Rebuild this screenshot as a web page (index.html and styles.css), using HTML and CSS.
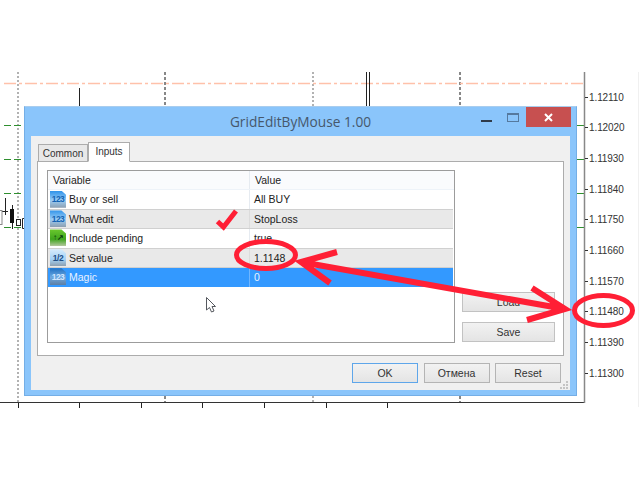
FILE: index.html
```html
<!DOCTYPE html>
<html lang="en">
<head>
<meta charset="utf-8">
<title>GridEditByMouse 1.00</title>
<link rel="stylesheet" href="styles.css">
</head>
<body>
<div class="stage">
  <svg class="chart" width="640" height="480" viewBox="0 0 640 480">
    <g class="grid-grey"><path d="M18 72V403M313 72V106M313 396V403"/></g>
    <g class="grid-black"><path d="M165 72V106M460 72V106M165 396V402M460 396V402"/></g>
    <path class="level" d="M4 83.500H585"/>
    <path class="green" d="M4 125.500H24M4 159.500H24M4 193.500H24M4 227.500H24M577 125.500H585M577 159.500H585M577 193.500H585M577 227.500H585"/>
    <path class="wick" d="M79.500 88V106M366.500 72V106M369.500 72V106M5.500 198V215M2 211.500H8M12.500 205V229"/>
    <rect class="body-black" x="10" y="209" width="4" height="14"/>
    <rect class="body-hollow" x="16.500" y="219.500" width="4" height="6"/>
    <rect class="body-grey" x="-2" y="210.500" width="4" height="14"/>
    <path class="wick" d="M24.500 218.500H22.500V228.500H24.500"/>
    <path class="axis-x" d="M0 402.500H585"/>
    <path class="axis-y" d="M584.500 72V403"/>
    <path class="edge" d="M638.500 72V407"/>
    <path class="wick" d="M18.500 403V408M79.500 403V408M141.500 403V408M202.500 403V408M264.500 403V408M326.500 403V408M387.500 403V408"/>
  </svg>

  <div class="axis">
    <div class="axis-row">1.12110</div>
    <div class="axis-row">1.12020</div>
    <div class="axis-row">1.11930</div>
    <div class="axis-row">1.11840</div>
    <div class="axis-row">1.11750</div>
    <div class="axis-row">1.11660</div>
    <div class="axis-row">1.11570</div>
    <div class="axis-row">1.11480</div>
    <div class="axis-row">1.11390</div>
    <div class="axis-row">1.11300</div>
  </div>

  <section class="window">
    <header class="titlebar">
      <h1 class="title">GridEditByMouse 1.00</h1>
      <div class="controls">
        <span class="ctl-min"></span>
        <span class="ctl-max"></span>
        <span class="ctl-close">
          <svg width="9" height="9" viewBox="0 0 9 9"><path d="M1 1L8 8M8 1L1 8"/></svg>
        </span>
      </div>
    </header>
    <div class="client">
      <nav class="tabs">
        <span class="tab">Common</span>
        <span class="tab tab-active">Inputs</span>
      </nav>
      <div class="panel">
        <div class="table">
          <div class="row row-head"><div class="cell-var head-var">Variable</div><div class="cell-val head-val">Value</div></div>
          <div class="row"><div class="cell-var"><span class="ico ico-blue">123</span>Buy or sell</div><div class="cell-val">All BUY</div></div>
          <div class="row row-alt"><div class="cell-var"><span class="ico ico-blue">123</span>What edit</div><div class="cell-val">StopLoss</div></div>
          <div class="row"><div class="cell-var"><span class="ico ico-green">↑↗</span>Include pending</div><div class="cell-val">true</div></div>
          <div class="row row-alt"><div class="cell-var"><span class="ico ico-light">1/2</span>Set value</div><div class="cell-val">1.1148</div></div>
          <div class="row row-sel"><div class="cell-var"><span class="ico ico-blue">123</span>Magic</div><div class="cell-val">0</div></div>
        </div>
        <div class="side">
          <button class="btn btn-side">Load</button>
          <button class="btn btn-side">Save</button>
        </div>
      </div>
      <footer class="footer">
        <button class="btn btn-foot btn-default">OK</button>
        <button class="btn btn-foot">Отмена</button>
        <button class="btn btn-foot">Reset</button>
      </footer>
    </div>
  </section>

  <svg class="overlay" width="640" height="480" viewBox="0 0 640 480">
    <g class="grip"><rect x="566" y="381" width="2" height="2"/><rect x="563" y="384" width="2" height="2"/><rect x="566" y="384" width="2" height="2"/><rect x="560" y="387" width="2" height="2"/><rect x="563" y="387" width="2" height="2"/><rect x="566" y="387" width="2" height="2"/></g>
    <path class="cursor" d="M206.500 297.500V310L209.500 307.500L211.500 312L214 311L212 306.500H215.500Z"/>
    <path class="mark-check" d="M217.500 221.500L223.500 227L236 211"/>
    <ellipse class="mark" cx="266" cy="255" rx="29.500" ry="13.500"/>
    <ellipse class="mark" cx="603.500" cy="310.500" rx="29" ry="15"/>
    <path class="mark-arrow" d="M301 262L565 309M337 252L301 262L330 283M532 288L565 309L527 320"/>
  </svg>
</div>
</body>
</html>
```
FILE: styles.css
```css
* { box-sizing: border-box; }
html, body { margin: 0; padding: 0; background: #fff; }
body { font-family: "Liberation Sans", Arial, sans-serif; font-size: 10.500px; color: #222; overflow: hidden; }
.stage { position: relative; width: 640px; height: 480px; overflow: hidden; }

/* chart canvas */
.chart, .overlay { position: absolute; left: 0; top: 0; }
.overlay { pointer-events: none; }
.chart path { fill: none; }
.grid-grey path { stroke: #999; stroke-width: 1.500; stroke-dasharray: 2 2; }
.grid-black path { stroke: #111; stroke-width: 1; stroke-dasharray: 3 2; }
.level { stroke: #ffc1aa; stroke-width: 1.500; stroke-dasharray: 12 3 3 3; }
.green { stroke: #2f8f2f; stroke-width: 1; stroke-dasharray: 7 3; }
.wick { stroke: #222; stroke-width: 1; }
.body-black { fill: #111; }
.body-hollow { fill: #fff; stroke: #222; }
.body-grey { fill: #fff; stroke: #888; }
.axis-x { stroke: #333; stroke-width: 1; }
.axis-y { stroke: #888; stroke-width: 1.500; }
.edge { stroke: #f0f0f0; stroke-width: 1; }

/* price axis */
.axis { position: absolute; left: 585px; top: 82px; display: flex; flex-direction: column; }
.axis-row { height: 30.670px; display: flex; align-items: center; font-size: 10px; color: #333; gap: 1px; letter-spacing: -0.100px; }
.axis-row::before { content: ""; width: 3px; height: 1px; background: #333; }

/* dialog window */
.window { position: absolute; left: 24px; top: 106px; width: 553px; height: 290px; display: flex; flex-direction: column; background: #8ac5fb; border: 1px solid #74aee6; border-top-color: #a9cdee; padding: 0 6px 5px; }
.titlebar { position: relative; height: 29px; flex: none; display: flex; align-items: center; justify-content: center; }
.title { margin: 0; font-family: "Open Sans", sans-serif; font-weight: 400; font-size: 13.700px; color: #46586c; }
.controls { position: absolute; right: -1px; top: 0; display: flex; align-items: flex-start; }
.ctl-min { width: 11px; height: 2px; background: #2f3b4a; margin-top: 13px; margin-right: 15px; }
.ctl-max { width: 12px; height: 9px; border: 1px solid #55799e; border-top-width: 2px; margin-top: 6px; margin-right: 7px; }
.ctl-close { width: 45px; height: 20px; background: #c75050; display: flex; align-items: center; justify-content: center; }
.ctl-close path { stroke: #fff; stroke-width: 2; fill: none; }

.client { flex: 1; min-height: 0; display: flex; flex-direction: column; background: #f0f0f0; padding: 6px 6px 0; }
.tabs { display: flex; align-items: flex-end; height: 20px; padding-left: 1px; position: relative; z-index: 1; margin-bottom: -1px; }
.tab { height: 18px; width: 50px; display: flex; align-items: center; justify-content: center; background: #e8e8e8; border: 1px solid #acacac; color: #333; font-size: 10px; padding-top: 1px; }
.tab-active { height: 20px; width: 42px; background: #fff; border-bottom-color: #fff; padding-top: 0; padding-bottom: 1px; }

.panel { height: 195px; flex: none; display: flex; background: #fff; border: 1px solid #acacac; padding: 8px 8px 12px 9px; }
.table { width: 408px; flex: none; border: 1px solid #9c9c9c; background: #fff; display: flex; flex-direction: column; }
.row { height: 19.400px; flex: none; display: grid; grid-template-columns: 202px 1fr; align-items: stretch; }
.row-head { height: 19px; background: #fafbfd; border-bottom: 1px solid #eef3f9; }
.row-alt { background: #e9e9e9; border-top: 1px solid #d0d0d0; border-bottom: 1px solid #d0d0d0; margin-right: 1px; }
.row-sel { background: #3399ff; color: #e8f2ff; margin-right: 1px; }
.cell-var { display: flex; align-items: center; gap: 3px; padding: 0 0 1px 2px; border-right: 1px solid #e6ebf1; }
.row-alt .cell-var { border-right-color: #dcdcdc; }
.row-sel .cell-var { border-right-color: #6fb6ff; }
.cell-val { display: flex; align-items: center; padding: 0 0 1px 4px; }
.head-var { padding-left: 5px; }
.head-val { padding-left: 5px; }

.ico { width: 16px; height: 17px; flex: none; display: flex; align-items: center; justify-content: center; font-size: 8.500px; font-weight: 700; letter-spacing: -0.500px; clip-path: polygon(0 0, 72% 0, 100% 24%, 100% 100%, 0 100%); }
.ico-blue { background: linear-gradient(#2f93ea 0%, #9ccdf5 55%, #8d9fb0 100%); color: #1464b4; }
.ico-light { background: linear-gradient(#d8ecfc 0%, #a4d2f6 60%, #8d9fb0 100%); color: #1d4d86; }
.ico-green { background: linear-gradient(#6cc92e 0%, #3fa51e 60%, #b3c79d 100%); color: #0b3d0b; font-size: 8px; }
.row-sel .ico-blue { background: linear-gradient(#1c6fc4 0%, #6ea9e0 55%, #5d7fa3 100%); color: #cfe6ff; }

.side { flex: 1; display: flex; flex-direction: column; justify-content: flex-end; align-items: flex-start; padding: 0 0 1px 7px; gap: 10px; }
.btn { font: inherit; color: #333; background: linear-gradient(#f2f2f2, #e4e4e4); border: 1px solid #c2c2c2; padding: 0; }
.btn-side { width: 93px; height: 20px; }
.footer { flex: 1; display: flex; justify-content: flex-end; align-items: flex-start; gap: 5.500px; padding: 7px 3px 0 0; }
.btn-foot { width: 66px; height: 20px; border-color: #b4b4b4; }
.btn-default { border-color: #5ea6ea; }

/* annotations */
.grip rect { fill: #c4c4c4; }
.cursor { fill: #fff; stroke: #55585e; stroke-width: 1; }
.mark, .mark-arrow, .mark-check { fill: none; stroke: #ff1f35; }
.mark { stroke-width: 5; }
.mark-arrow { stroke-width: 6; }
.mark-check { stroke-width: 5; }
```
